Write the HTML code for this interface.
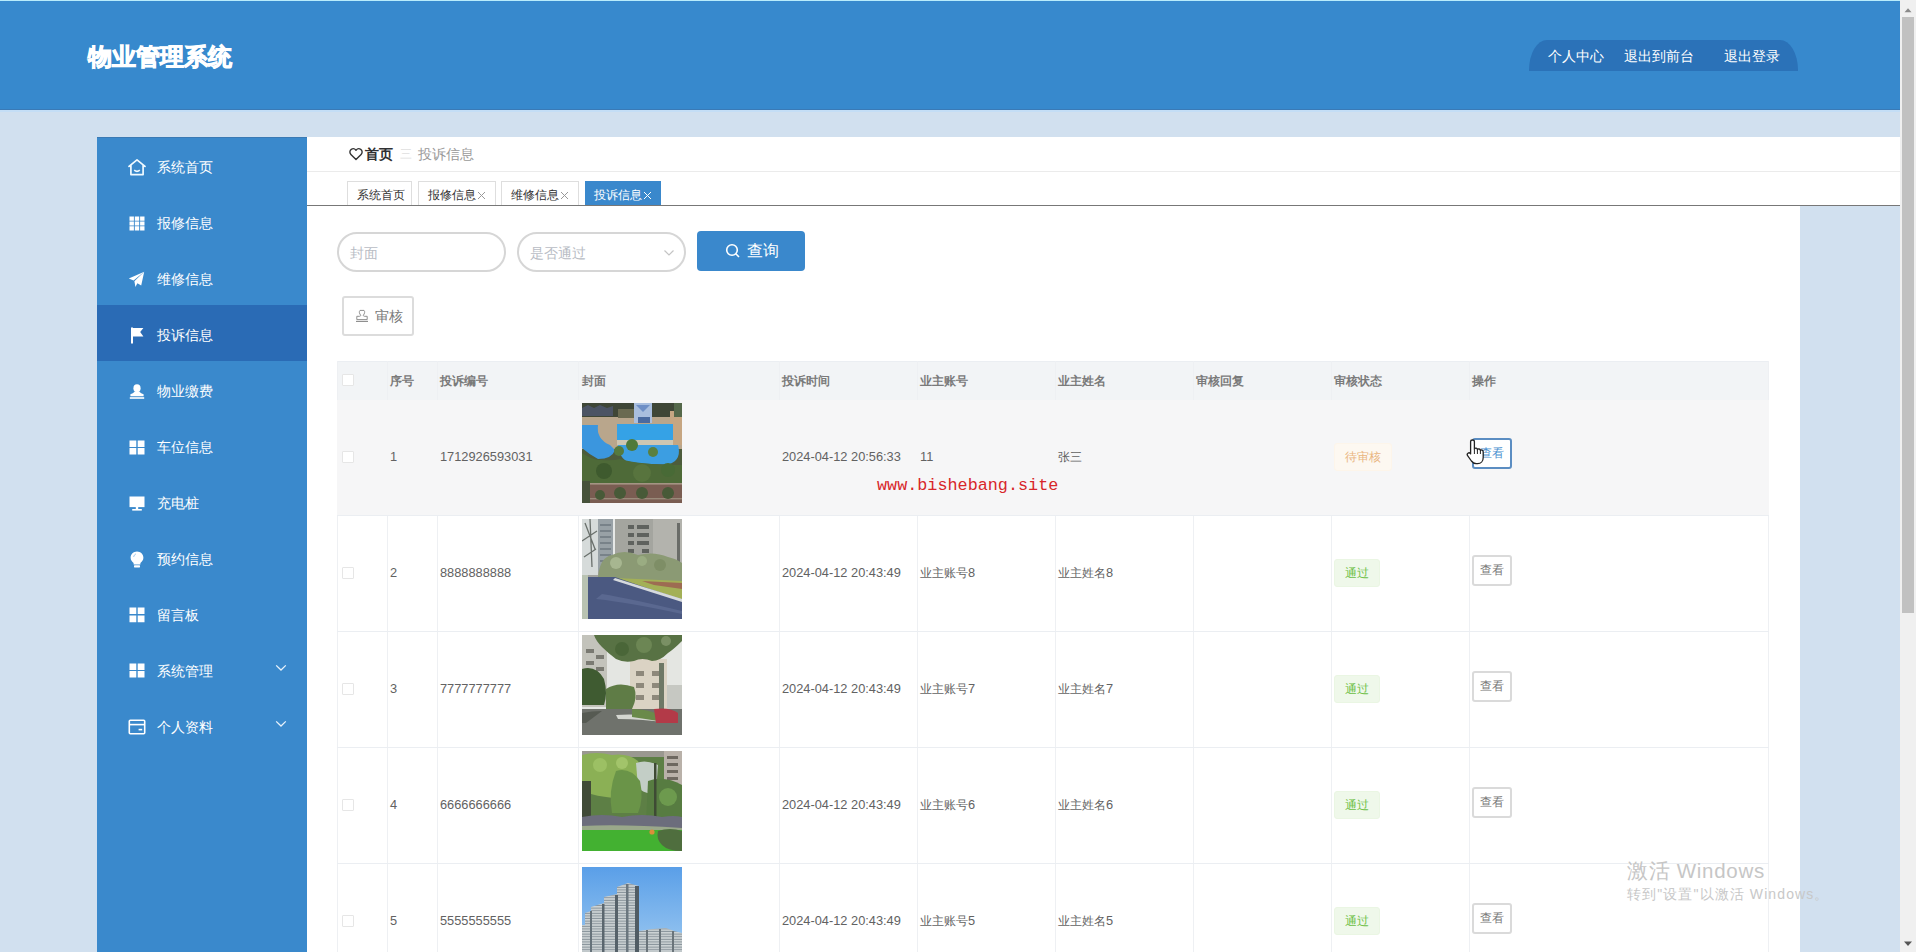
<!DOCTYPE html>
<html><head><meta charset="utf-8">
<style>
*{box-sizing:border-box;margin:0;padding:0}
html,body{width:1916px;height:952px;overflow:hidden}
body{background:#d1e0ef;font-family:"Liberation Sans",sans-serif;position:relative}
.abs{position:absolute;white-space:nowrap}
#header{left:0;top:0;width:1900px;height:110px;background:#3789cd;border-top:1px solid #b8ecfc;border-bottom:1px solid #3a7ab6}
#title{left:88px;top:42px;font-size:24px;font-weight:bold;color:#fff;line-height:30px;-webkit-text-stroke:0.9px #fff}
#pill{left:1529px;top:40px;width:269px;height:31px;background:#2b72b8;border-radius:18px 18px 0 0 / 30px 30px 0 0}
.nav{top:41px;font-size:14px;color:#fff;line-height:30px}
#scroll{left:1900px;top:0;width:16px;height:952px;background:#f0f0f0}
#thumb{left:1902px;top:17px;width:12px;height:596px;background:#c1c1c1}
#side{left:97px;top:137px;width:210px;height:815px;background:#3a89cc;box-shadow:inset 0 1px 0 #3a7ab4}
.mi{position:absolute;left:0;width:210px;height:56px}
.mi.act{background:#2a6bb5}
.mi .t{position:absolute;left:60px;top:2px;line-height:56px;font-size:14px;color:#fff;white-space:nowrap}
.mi svg{position:absolute;left:31px;top:21px}
.mi .chev{position:absolute;left:179px;top:28px}
#top1{left:307px;top:137px;width:1593px;height:68px;background:#fff}
#bcline{left:307px;top:171px;width:1593px;height:1px;background:#ebebeb}
#tabline{left:307px;top:205px;width:1593px;height:1px;background:#777}
#main{left:307px;top:206px;width:1493px;height:746px;background:#fff}
.tab{top:181px;height:24px;border:1px solid #dedede;border-bottom:none;font-size:12px;color:#333;line-height:26px;padding-left:9px;background:#fff}
.tab.on{background:#3a88cc;border-color:#3a88cc;color:#fff}
.inp{top:232px;height:40px;width:169px;border:2px solid #d6d6d6;border-radius:20px;font-size:14px;color:#b8bcc4;line-height:38px;padding-left:11px;background:#fff}
#qbtn{left:697px;top:231px;width:108px;height:40px;background:#3a88cc;border-radius:4px;color:#fff;font-size:16px;line-height:40px}
#shbtn{left:342px;top:296px;width:72px;height:40px;border:2px solid #dcdcdc;border-radius:3px;font-size:13px;color:#777;line-height:36px;background:#fff}
.th{top:361px;height:39px;background:#f2f4f6}
.htxt{top:374px;font-size:12px;font-weight:bold;color:#7a7a7a;line-height:14px}
.vl{width:1px;background:#eef0f3}
.hl{height:1px;background:#ebeef2}
.td{font-size:12.8px;color:#626262;line-height:14px}
.td .c{font-size:12px}
.cb{width:12px;height:12px;background:#fff;border:1px solid #e6e6e6;border-radius:1px}
.tag{height:28px;font-size:12px;line-height:26px;padding-left:10px;border:1px solid;border-radius:3px}
.tag.w{width:58px;background:#fdf8f1;border-color:#fdf5ea;color:#e9b580}
.tag.p{width:46px;background:#eff8ea;border-color:#eaf6e3;color:#6cbf45}
.vb{width:40px;height:31px;border:2px solid #dadada;border-radius:3px;font-size:12px;color:#777;line-height:27px;padding-left:6px;background:#fff}
.vb.on{border-color:#5b8dc2;color:#4a90cf}
.img{left:582px;width:100px;height:100px}
</style></head><body>
<div id="header" class="abs"></div>
<div class="abs" style="left:0;top:110px;width:1900px;height:2px;background:#c4def6"></div>
<div id="title" class="abs">物业管理系统</div>
<div id="pill" class="abs"></div>
<div class="abs nav" style="left:1548px">个人中心</div>
<div class="abs nav" style="left:1624px">退出到前台</div>
<div class="abs nav" style="left:1724px">退出登录</div>

<div id="side" class="abs">
  <div class="mi" style="top:0"><div class="t">系统首页</div></div>
  <div class="mi" style="top:56px"><div class="t">报修信息</div></div>
  <div class="mi" style="top:112px"><div class="t">维修信息</div></div>
  <div class="mi act" style="top:168px"><div class="t">投诉信息</div></div>
  <div class="mi" style="top:224px"><div class="t">物业缴费</div></div>
  <div class="mi" style="top:280px"><div class="t">车位信息</div></div>
  <div class="mi" style="top:336px"><div class="t">充电桩</div></div>
  <div class="mi" style="top:392px"><div class="t">预约信息</div></div>
  <div class="mi" style="top:448px"><div class="t">留言板</div></div>
  <div class="mi" style="top:504px"><div class="t">系统管理</div></div>
  <div class="mi" style="top:560px"><div class="t">个人资料</div></div>
</div>

<div id="top1" class="abs"></div>
<div id="bcline" class="abs"></div>
<div id="main" class="abs"></div>
<div id="tabline" class="abs"></div>

<!-- breadcrumb -->
<svg class="abs" style="left:349px;top:147px" width="14" height="14" viewBox="0 0 14 14"><path d="M7 12.6 L1.9 7.4 C0.4 5.9 0.6 3.4 2.3 2.3 C3.8 1.3 5.8 1.7 7 3.2 C8.2 1.7 10.2 1.3 11.7 2.3 C13.4 3.4 13.6 5.9 12.1 7.4 Z" fill="none" stroke="#333" stroke-width="1.4" stroke-linejoin="round"/></svg>
<div class="abs" style="left:365px;top:146px;font-size:14px;font-weight:bold;color:#303133;line-height:16px">首页</div>
<div class="abs" style="left:400px;top:146px;font-size:12px;color:#e0e0e0;line-height:16px">三</div>
<div class="abs" style="left:418px;top:146px;font-size:14px;color:#999;line-height:16px">投诉信息</div>

<!-- tabs -->
<div class="abs tab" style="left:347px;width:65px">系统首页</div>
<div class="abs tab" style="left:418px;width:78px">报修信息<svg width="9" height="9" viewBox="0 0 9 9" style="margin-left:1px;vertical-align:-1px"><path d="M1 1L8 8M8 1L1 8" stroke="#999" stroke-width="1"/></svg></div>
<div class="abs tab" style="left:501px;width:78px">维修信息<svg width="9" height="9" viewBox="0 0 9 9" style="margin-left:1px;vertical-align:-1px"><path d="M1 1L8 8M8 1L1 8" stroke="#999" stroke-width="1"/></svg></div>
<div class="abs tab on" style="left:585px;width:76px;padding-left:8px">投诉信息<svg width="9" height="9" viewBox="0 0 9 9" style="margin-left:1px;vertical-align:-1px"><path d="M1 1L8 8M8 1L1 8" stroke="#fff" stroke-width="1"/></svg></div>

<!-- search -->
<div class="abs inp" style="left:337px">封面</div>
<div class="abs inp" style="left:517px">是否通过</div>
<svg class="abs" style="left:663px;top:248px" width="12" height="10" viewBox="0 0 12 10"><path d="M1.5 2.5 L6 7 L10.5 2.5" fill="none" stroke="#c4c4c4" stroke-width="1.2"/></svg>
<div id="qbtn" class="abs"></div>
<svg class="abs" style="left:725px;top:243px" width="16" height="16" viewBox="0 0 16 16"><circle cx="7" cy="7" r="5.3" fill="none" stroke="#fff" stroke-width="1.6"/><path d="M10.8 10.8 L14 14" stroke="#fff" stroke-width="1.6"/></svg>
<div class="abs" style="left:747px;top:242px;font-size:16px;color:#fff;line-height:18px">查询</div>
<div id="shbtn" class="abs"></div>
<svg class="abs" style="left:348px;top:302px" width="28" height="28" viewBox="0 0 28 28"><path d="M12 8.4 H16 C17.2 9.6 16.6 11.6 15.4 13.2 C15.2 13.8 15.6 14.2 16.4 14.3 H19.2 V17.6 H8.8 V14.3 H11.6 C12.4 14.2 12.8 13.8 12.6 13.2 C11.4 11.6 10.8 9.6 12 8.4 Z" fill="none" stroke="#8a8a8a" stroke-width="0.95" stroke-linejoin="round"/><path d="M8 19.4 H20" stroke="#8a8a8a" stroke-width="1.1"/></svg>
<div class="abs" style="left:375px;top:308px;font-size:14px;color:#777;line-height:16px">审核</div>

<div id="tablearea">
<div class="abs th" style="left:337px;width:1432px"></div>
<div class="abs" style="left:337px;top:400px;width:1432px;height:115px;background:#f6f6f7"></div>
<div class="abs htxt" style="left:390px">序号</div>
<div class="abs htxt" style="left:440px">投诉编号</div>
<div class="abs htxt" style="left:582px">封面</div>
<div class="abs htxt" style="left:782px">投诉时间</div>
<div class="abs htxt" style="left:920px">业主账号</div>
<div class="abs htxt" style="left:1058px">业主姓名</div>
<div class="abs htxt" style="left:1196px">审核回复</div>
<div class="abs htxt" style="left:1334px">审核状态</div>
<div class="abs htxt" style="left:1472px">操作</div>
<div class="abs cb" style="left:342px;top:374px"></div>
<div class="abs hl" style="left:337px;top:361px;width:1432px"></div>
<div class="abs vl" style="left:337px;top:361px;height:39px"></div>
<div class="abs vl" style="left:337px;top:516px;height:436px"></div>
<div class="abs vl" style="left:387px;top:361px;height:39px"></div>
<div class="abs vl" style="left:387px;top:516px;height:436px"></div>
<div class="abs vl" style="left:437px;top:361px;height:39px"></div>
<div class="abs vl" style="left:437px;top:516px;height:436px"></div>
<div class="abs vl" style="left:578px;top:361px;height:39px"></div>
<div class="abs vl" style="left:578px;top:516px;height:436px"></div>
<div class="abs vl" style="left:779px;top:361px;height:39px"></div>
<div class="abs vl" style="left:779px;top:516px;height:436px"></div>
<div class="abs vl" style="left:917px;top:361px;height:39px"></div>
<div class="abs vl" style="left:917px;top:516px;height:436px"></div>
<div class="abs vl" style="left:1055px;top:361px;height:39px"></div>
<div class="abs vl" style="left:1055px;top:516px;height:436px"></div>
<div class="abs vl" style="left:1193px;top:361px;height:39px"></div>
<div class="abs vl" style="left:1193px;top:516px;height:436px"></div>
<div class="abs vl" style="left:1331px;top:361px;height:39px"></div>
<div class="abs vl" style="left:1331px;top:516px;height:436px"></div>
<div class="abs vl" style="left:1469px;top:361px;height:39px"></div>
<div class="abs vl" style="left:1469px;top:516px;height:436px"></div>
<div class="abs vl" style="left:1768px;top:361px;height:39px"></div>
<div class="abs vl" style="left:1768px;top:516px;height:436px"></div>
<div class="abs hl" style="left:337px;top:515px;width:1432px"></div>
<div class="abs hl" style="left:337px;top:631px;width:1432px"></div>
<div class="abs hl" style="left:337px;top:747px;width:1432px"></div>
<div class="abs hl" style="left:337px;top:863px;width:1432px"></div>
<div class="abs hl" style="left:337px;top:979px;width:1432px"></div>
<div class="abs cb" style="left:342px;top:451px"></div>
<div class="abs td" style="left:390px;top:450px">1</div>
<div class="abs td" style="left:440px;top:450px">1712926593031</div>
<div class="abs td" style="left:782px;top:450px">2024-04-12 20:56:33</div>
<div class="abs td" style="left:920px;top:450px">11</div>
<div class="abs td" style="left:1058px;top:450px"><span class="c">张三</span></div>
<div class="abs tag w" style="left:1334px;top:443px">待审核</div>
<div class="abs vb on" style="left:1472px;top:438px">查看</div>
<svg class="abs img" style="top:403px" viewBox="0 0 100 100"><rect width="100" height="100" fill="#4d5c3c"/>
<rect width="100" height="17" fill="#3f4636"/>
<path d="M0 5 L6 2 L12 5 L18 2 L25 5 L31 3 V13 H0 Z" fill="#4c5464"/>
<rect x="0" y="14" width="100" height="32" fill="#b9a68c"/>
<rect x="36" y="6" width="16" height="9" fill="#6a6a50"/>
<rect x="52" y="0" width="18" height="20" fill="#a9bede"/>
<path d="M54 2 L61 9 L68 2 Z" fill="#6f8fc6"/>
<rect x="56" y="14" width="12" height="6" fill="#4a6aa0"/>
<rect x="88" y="8" width="12" height="34" fill="#c6a682"/><rect x="92" y="0" width="8" height="14" fill="#55684a"/>
<path d="M0 22 H16 Q14 36 28 42 L33 47 Q30 56 16 56 Q8 52 0 45 Z" fill="#3b96de"/>
<rect x="35" y="21" width="56" height="16" fill="#35a2e6"/>
<rect x="35" y="37" width="56" height="5" fill="#cfc6b2"/>
<path d="M36 42 H96 Q100 56 88 61 Q62 62 44 58 Q36 52 36 42 Z" fill="#3c9ee2"/>
<path d="M0 50 Q12 58 20 57 Q30 58 38 56 Q60 62 100 62 V82 H0 Z" fill="#4e6a38"/>
<circle cx="50" cy="42" r="6" fill="#4f7a3a"/><circle cx="37" cy="48" r="5" fill="#557a3e"/><circle cx="71" cy="49" r="5" fill="#5a8040"/>
<circle cx="22" cy="68" r="8" fill="#3e5a2e"/><circle cx="60" cy="70" r="9" fill="#58743e"/><circle cx="86" cy="67" r="7" fill="#486a36"/>
<rect x="8" y="80" width="92" height="20" fill="#7a5d52"/>
<rect x="8" y="80" width="92" height="1.6" fill="#a49484"/>
<rect x="8" y="95" width="92" height="1.4" fill="#9a8a7a"/>
<rect x="0" y="78" width="8" height="22" fill="#46523a"/>
<circle cx="38" cy="90" r="6" fill="#485a38"/><circle cx="60" cy="90" r="6" fill="#485a38"/><circle cx="86" cy="90" r="6" fill="#485a38"/><circle cx="18" cy="92" r="5" fill="#485a38"/></svg>
<div class="abs cb" style="left:342px;top:567px"></div>
<div class="abs td" style="left:390px;top:566px">2</div>
<div class="abs td" style="left:440px;top:566px">8888888888</div>
<div class="abs td" style="left:782px;top:566px">2024-04-12 20:43:49</div>
<div class="abs td" style="left:920px;top:566px"><span class="c">业主账号</span>8</div>
<div class="abs td" style="left:1058px;top:566px"><span class="c">业主姓名</span>8</div>
<div class="abs tag p" style="left:1334px;top:559px">通过</div>
<div class="abs vb" style="left:1472px;top:555px">查看</div>
<svg class="abs img" style="top:519px" viewBox="0 0 100 100"><rect width="100" height="100" fill="#a2a39e"/>
<rect x="0" y="0" width="16" height="56" fill="#d6dbda"/>
<path d="M3 4 L13 30 M8 0 L10 48 M0 22 L15 12 M2 38 L14 30" stroke="#6a706c" stroke-width="1.3" fill="none"/>
<rect x="16" y="0" width="15" height="52" fill="#98a1a6"/>
<path d="M18 6h11M18 12h11M18 18h11M18 24h11M18 30h11M18 36h11M18 42h11" stroke="#6e7880" stroke-width="1.4"/>
<rect x="31" y="0" width="2.2" height="56" fill="#e6e8e6"/>
<rect x="33" y="0" width="38" height="50" fill="#a4a59f"/>
<rect x="71" y="0" width="29" height="50" fill="#b3b3ad"/>
<path d="M46 6h6v4h-6zM46 14h6v4h-6zM46 22h6v4h-6zM46 30h6v4h-6zM55 6h5v4h-5zM55 14h5v4h-5zM55 22h5v4h-5zM60 6h7v4h-7zM60 14h7v4h-7zM60 22h7v4h-7zM60 30h7v4h-7z" fill="#5f625e"/>
<rect x="95" y="4" width="3" height="40" fill="#6a6c68"/>
<path d="M16 58 Q18 38 30 36 Q42 30 56 36 Q72 32 86 38 Q95 40 100 44 V64 H16 Z" fill="#8b9a74"/>
<circle cx="34" cy="44" r="6" fill="#a7b690"/><circle cx="60" cy="42" r="5" fill="#9aac82"/><circle cx="78" cy="46" r="6" fill="#7e8e66"/>
<path d="M33 59 L100 62 V80 Z" fill="#a3b057"/>
<path d="M60 62 L100 64 V70 L72 66 Z" fill="#9d6c52"/>
<path d="M6 58 H33 L100 81 V100 H6 Z" fill="#4b5981"/>
<path d="M20 75 Q50 80 100 92 V95 Q50 84 14 80 Z" fill="#5a6890"/>
<path d="M33 59 L100 80 V83 L31 61 Z" fill="#d6dade"/>
<rect x="0" y="56" width="6" height="44" fill="#b9c3b2"/></svg>
<div class="abs cb" style="left:342px;top:683px"></div>
<div class="abs td" style="left:390px;top:682px">3</div>
<div class="abs td" style="left:440px;top:682px">7777777777</div>
<div class="abs td" style="left:782px;top:682px">2024-04-12 20:43:49</div>
<div class="abs td" style="left:920px;top:682px"><span class="c">业主账号</span>7</div>
<div class="abs td" style="left:1058px;top:682px"><span class="c">业主姓名</span>7</div>
<div class="abs tag p" style="left:1334px;top:675px">通过</div>
<div class="abs vb" style="left:1472px;top:671px">查看</div>
<svg class="abs img" style="top:635px" viewBox="0 0 100 100"><rect width="100" height="100" fill="#e4e6e2"/>
<rect x="0" y="0" width="25" height="72" fill="#c3c3bb"/>
<path d="M4 14h8v4H4zM4 26h8v4H4zM14 20h8v4h-8zM14 32h8v4h-8z" fill="#7a7a72"/>
<rect x="48" y="24" width="37" height="52" fill="#dbd3c4"/>
<path d="M54 36h8v5h-8zM70 36h8v5h-8zM54 48h8v5h-8zM70 48h8v5h-8zM54 60h8v5h-8zM70 60h8v5h-8z" fill="#8e887b"/>
<path d="M12 0 H100 V6 Q92 14 86 18 Q78 26 70 26 Q60 22 52 26 Q42 28 34 24 Q26 18 20 12 Q14 6 12 0 Z" fill="#587244"/>
<circle cx="40" cy="14" r="7" fill="#4a6638"/><circle cx="62" cy="10" r="8" fill="#6c8654"/><circle cx="84" cy="6" r="5" fill="#7a9064"/>
<path d="M0 34 Q14 30 22 44 Q26 58 22 70 H0 Z" fill="#3f5b31"/>
<path d="M24 54 Q36 46 52 52 Q56 62 50 74 H24 Z" fill="#5f7c46"/>
<rect x="77" y="28" width="5" height="46" fill="#6e7866"/>
<rect x="85" y="50" width="15" height="25" fill="#c6c8c2"/>
<path d="M0 74 H100 V100 H0 Z" fill="#6f726c"/>
<path d="M34 80 Q60 78 88 84 V88 Q60 84 36 84 Z" fill="#d4d6d0"/>
<path d="M50 74 Q66 74 78 80 L76 86 Q64 84 50 82 Z" fill="#6a8a4a"/>
<path d="M72 74 Q88 72 96 78 V88 H74 Z" fill="#b33a48"/>
<path d="M0 78 Q10 76 20 76 L4 88 H0 Z" fill="#565a52"/></svg>
<div class="abs cb" style="left:342px;top:799px"></div>
<div class="abs td" style="left:390px;top:798px">4</div>
<div class="abs td" style="left:440px;top:798px">6666666666</div>
<div class="abs td" style="left:782px;top:798px">2024-04-12 20:43:49</div>
<div class="abs td" style="left:920px;top:798px"><span class="c">业主账号</span>6</div>
<div class="abs td" style="left:1058px;top:798px"><span class="c">业主姓名</span>6</div>
<div class="abs tag p" style="left:1334px;top:791px">通过</div>
<div class="abs vb" style="left:1472px;top:787px">查看</div>
<svg class="abs img" style="top:751px" viewBox="0 0 100 100"><rect width="100" height="100" fill="#5d7f45"/>
<rect x="0" y="0" width="100" height="6" fill="#9a9890"/>
<path d="M0 4 Q14 0 30 4 Q46 2 56 10 Q62 24 56 40 Q44 50 24 46 Q6 44 0 38 Z" fill="#8bb055"/>
<circle cx="18" cy="14" r="7" fill="#9cc064"/><circle cx="40" cy="12" r="6" fill="#a2c46a"/>
<path d="M54 12 Q64 8 76 14 L74 42 Q62 44 56 36 Z" fill="#c3cec6"/>
<path d="M34 20 Q48 16 58 30 Q62 48 56 62 H30 Q26 40 34 20 Z" fill="#6a9448"/>
<rect x="82" y="0" width="18" height="36" fill="#b9b1a9"/>
<path d="M85 5h11v3H85zM85 12h11v3H85zM85 19h11v3H85zM85 26h11v3H85z" fill="#6e6860"/>
<path d="M66 30 Q82 24 100 34 V72 H64 Z" fill="#577c41"/>
<circle cx="86" cy="46" r="9" fill="#6d9a4e"/>
<rect x="72" y="12" width="2.5" height="64" fill="#3e4a34"/>
<path d="M0 30 H9 V70 H0 Z" fill="#414b38"/>
<path d="M0 66 Q20 62 40 66 Q60 62 80 66 Q92 64 100 66 V78 H0 Z" fill="#6c6d7c"/>
<path d="M0 75 Q40 73 100 77 V81 H0 Z" fill="#9aa88a"/>
<path d="M0 79 H100 V100 H0 Z" fill="#43b131"/>
<path d="M76 80 Q88 76 100 80 V100 Q86 100 80 94 Q74 88 76 80 Z" fill="#4f6e3e"/>
<circle cx="70" cy="81" r="2.6" fill="#d98f3a"/></svg>
<div class="abs cb" style="left:342px;top:915px"></div>
<div class="abs td" style="left:390px;top:914px">5</div>
<div class="abs td" style="left:440px;top:914px">5555555555</div>
<div class="abs td" style="left:782px;top:914px">2024-04-12 20:43:49</div>
<div class="abs td" style="left:920px;top:914px"><span class="c">业主账号</span>5</div>
<div class="abs td" style="left:1058px;top:914px"><span class="c">业主姓名</span>5</div>
<div class="abs tag p" style="left:1334px;top:907px">通过</div>
<div class="abs vb" style="left:1472px;top:903px">查看</div>
<svg class="abs img" style="top:867px" viewBox="0 0 100 100"><defs><linearGradient id="sky" x1="0" y1="0" x2="0" y2="1"><stop offset="0" stop-color="#5a9fe8"/><stop offset="1" stop-color="#a6cff2"/></linearGradient>
<pattern id="win" width="3" height="2.6" patternUnits="userSpaceOnUse"><rect width="3" height="2.6" fill="#cdd3d5"/><rect y="1.6" width="3" height="0.9" fill="#7f8b92"/></pattern></defs>
<rect width="100" height="100" fill="url(#sky)"/>
<path d="M0 58 H3 V46 L9 44 V40 L22 36 V30 L35 27 V20 L46 16 L57 19 V100 H0 Z" fill="url(#win)"/>
<rect x="8" y="44" width="2" height="56" fill="#66727a"/><rect x="20" y="37" width="2.5" height="63" fill="#5a666e"/><rect x="33" y="28" width="3" height="72" fill="#56626a"/><rect x="44" y="17" width="2.5" height="83" fill="#6a767e"/><rect x="53" y="19" width="4" height="81" fill="#505c64"/>
<path d="M57 64 L70 62 L84 61 L92 64 L100 66 V100 H57 Z" fill="url(#win)"/>
<rect x="64" y="63" width="2" height="37" fill="#6a747a"/><rect x="77" y="62" width="2" height="38" fill="#6a747a"/><rect x="90" y="64" width="2" height="36" fill="#6a747a"/>
<path d="M0 94 Q20 88 40 94 Q60 90 100 95 V100 H0 Z" fill="#7aa060"/></svg>
</div>

<!-- sidebar icons -->
<svg class="abs" style="left:128px;top:158px" width="18" height="18" viewBox="0 0 18 18"><path d="M1 8.4 L9 1.8 L17 8.4 M2.9 7 V16.6 H15.1 V7" fill="none" stroke="#f0faff" stroke-width="1.7" stroke-linejoin="round" stroke-linecap="round"/><path d="M6.2 12.2 Q9 14.6 11.8 12.2" fill="none" stroke="#f0faff" stroke-width="1.6"/></svg>
<svg class="abs" style="left:129px;top:216px" width="16" height="15" viewBox="0 0 16 15"><path d="M0.5 0.5h4.4v4.2H0.5zM5.8 0.5h4.4v4.2H5.8zM11.1 0.5h4.4v4.2h-4.4zM0.5 5.4h4.4v4.2H0.5zM5.8 5.4h4.4v4.2H5.8zM11.1 5.4h4.4v4.2h-4.4zM0.5 10.3h4.4v4.2H0.5zM5.8 10.3h4.4v4.2H5.8zM11.1 10.3h4.4v4.2h-4.4z" fill="#fff"/></svg>
<svg class="abs" style="left:128px;top:271px" width="17" height="17" viewBox="0 0 17 17"><path d="M16.2 0.8 L0.8 7.6 L5.6 9.6 Z" fill="#fff"/><path d="M16.2 0.8 L6.4 10.2 L7.4 16 L9.4 12.2 L13.2 14.6 Z" fill="#fff"/></svg>
<svg class="abs" style="left:130px;top:327px" width="14" height="17" viewBox="0 0 14 17"><path d="M1 0.6 H3 V16.6 H1 Z" fill="#fff"/><path d="M3 1 H13.4 L10.2 5 L13.4 9.4 H3 Z" fill="#fff"/></svg>
<svg class="abs" style="left:129px;top:384px" width="16" height="15" viewBox="0 0 16 15"><ellipse cx="8" cy="4.2" rx="3.6" ry="4" fill="#fff"/><path d="M5.6 7.8 Q4 9.6 1.4 10.2 V12.2 H14.6 V10.2 Q12 9.6 10.4 7.8 Z" fill="#fff"/><rect x="0.8" y="13.2" width="14.4" height="1.6" fill="#fff"/></svg>
<svg class="abs" style="left:129px;top:440px" width="16" height="15" viewBox="0 0 16 15"><path d="M0.5 0.5h6.8v6.4H0.5zM8.7 0.5h6.8v6.4H8.7zM0.5 8.1h6.8v6.4H0.5zM8.7 8.1h6.8v6.4H8.7z" fill="#fff"/></svg>
<svg class="abs" style="left:129px;top:496px" width="16" height="15" viewBox="0 0 16 15"><rect x="0.5" y="0.5" width="15" height="10.6" fill="#fff"/><rect x="6.8" y="11" width="2.4" height="2" fill="#fff"/><rect x="3.2" y="13" width="9.6" height="1.6" fill="#fff"/></svg>
<svg class="abs" style="left:130px;top:551px" width="14" height="17" viewBox="0 0 14 17"><path d="M7 0.6 C10.6 0.6 13.4 3.4 13.4 6.8 C13.4 9.2 11.8 10.6 10.4 12 V13.4 H3.6 V12 C2.2 10.6 0.6 9.2 0.6 6.8 C0.6 3.4 3.4 0.6 7 0.6 Z" fill="#fff"/><rect x="4" y="14.2" width="6" height="2.2" rx="0.6" fill="#fff"/><path d="M3.6 6 Q4 3.6 6 2.8" fill="none" stroke="#9cc4ea" stroke-width="0.9"/></svg>
<svg class="abs" style="left:129px;top:607px" width="16" height="16" viewBox="0 0 16 16"><path d="M0.5 0.5h6.8v6.6H0.5zM8.7 0.5h6.8v6.6H8.7zM0.5 8.6h6.8v6.6H0.5zM8.7 8.6h6.8v6.6H8.7z" fill="#fff"/></svg>
<svg class="abs" style="left:129px;top:663px" width="16" height="15" viewBox="0 0 16 15"><path d="M0.5 0.5h6.8v6.4H0.5zM8.7 0.5h6.8v6.4H8.7zM0.5 8.1h6.8v6.4H0.5zM8.7 8.1h6.8v6.4H8.7z" fill="#fff"/></svg>
<svg class="abs" style="left:128px;top:719px" width="18" height="16" viewBox="0 0 18 16"><rect x="1.3" y="1.3" width="15.4" height="13.4" rx="1" fill="none" stroke="#fff" stroke-width="1.6"/><rect x="1.3" y="4.8" width="15.4" height="1.6" fill="#fff"/><rect x="10.6" y="9.8" width="3.6" height="1.6" fill="#fff"/></svg>
<svg class="abs" style="left:275px;top:664px" width="12" height="8" viewBox="0 0 12 8"><path d="M1.2 1.4 L6 6 L10.8 1.4" fill="none" stroke="#e8f2fb" stroke-width="1.3"/></svg>
<svg class="abs" style="left:275px;top:720px" width="12" height="8" viewBox="0 0 12 8"><path d="M1.2 1.4 L6 6 L10.8 1.4" fill="none" stroke="#e8f2fb" stroke-width="1.3"/></svg>
<!-- watermark -->
<div class="abs" style="left:877px;top:476px;font-family:'Liberation Mono',monospace;font-size:16.8px;color:#d8262a;line-height:20px">www.bishebang.site</div>
<!-- windows activation -->
<div class="abs" style="left:1627px;top:859px;font-size:20.5px;color:#c6c6c6;line-height:24px;letter-spacing:0.7px">激活 Windows</div>
<div class="abs" style="left:1627px;top:885px;font-size:14px;color:#c8c8c8;line-height:18px;letter-spacing:1.1px">转到"设置"以激活 Windows。</div>
<!-- cursor -->
<svg class="abs" style="left:1466px;top:438px" width="22" height="28" viewBox="0 0 22 28"><path d="M6.5 2 C7.6 2 8.4 2.8 8.4 3.8 V11.2 C8.6 10.4 9.4 10 10.2 10.2 C11 10.4 11.4 11 11.4 11.8 C11.6 11 12.4 10.8 13.2 11 C14 11.2 14.4 11.8 14.4 12.6 C14.8 12 15.6 11.8 16.2 12.2 C17 12.6 17.2 13.2 17.2 14 V19.4 C17.2 23 15 25.6 11.6 25.6 H10.2 C8 25.6 6.6 24.6 5.4 23 L1.6 17.6 C1 16.8 1.2 15.8 2 15.2 C2.8 14.6 3.8 14.8 4.4 15.6 L4.6 15.9 V3.8 C4.6 2.8 5.4 2 6.5 2 Z" fill="#fff" stroke="#222" stroke-width="1.3" stroke-linejoin="round"/><path d="M8.4 11.2 V16 M11.4 11.8 V16 M14.4 12.6 V16" stroke="#222" stroke-width="1"/></svg>
<div id="scroll" class="abs"></div>
<div id="thumb" class="abs"></div>
<!-- scrollbar arrows -->
<svg class="abs" style="left:1903px;top:6px" width="10" height="8" viewBox="0 0 10 8"><path d="M1.5 6.2 L5 2.2 L8.5 6.2 Z" fill="#8a8a8a"/></svg>
<svg class="abs" style="left:1903px;top:940px" width="10" height="8" viewBox="0 0 10 8"><path d="M1 1.5 L5 6 L9 1.5 Z" fill="#555"/></svg>


</body></html>
